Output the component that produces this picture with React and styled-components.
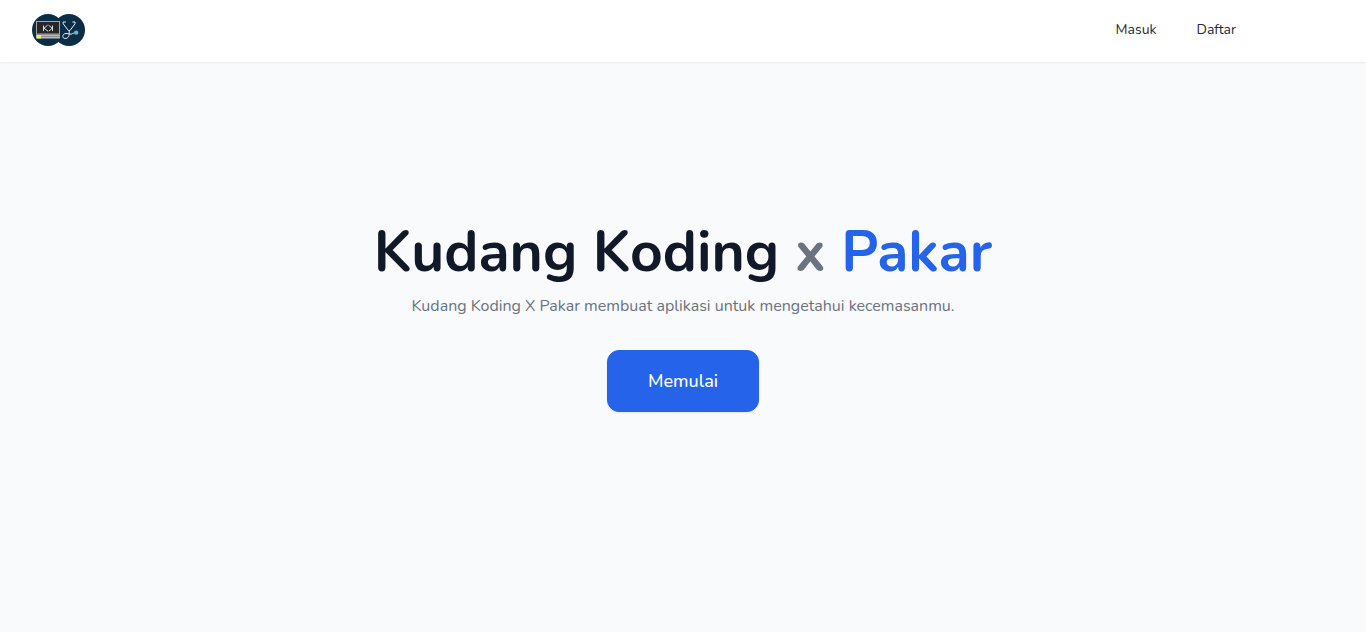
import React from "react";
import styled, { createGlobalStyle } from "styled-components";

const GlobalStyle = createGlobalStyle`
  *, *::before, *::after { box-sizing: border-box; }
  body {
    margin: 0;
    background: #f9fafc;
    font-family: Nunito, Lato, "Open Sans", sans-serif;
  }
`;

const Page = styled.div`
  display: flex;
  flex-direction: column;
  min-height: 100vh;
  background: #f9fafc;
`;

const Header = styled.header`
  display: flex;
  align-items: center;
  justify-content: space-between;
  padding: 14px 130px 16px 32px;
  background: #fff;
  box-shadow: 0 1px 2px rgba(0, 0, 0, 0.06);
`;

const HomeLink = styled.a`
  display: flex;
`;

const Nav = styled.nav`
  display: flex;
  gap: 40px;
`;

const NavLink = styled.a`
  color: #1f2937;
  font-size: 14px;
  line-height: 20px;
  text-decoration: none;
`;

const Hero = styled.main`
  display: flex;
  flex-direction: column;
  align-items: center;
  padding: 160px 32px 32px;
  text-align: center;
`;

const Title = styled.h1`
  margin: 0;
  color: #111827;
  font-size: 57px;
  font-weight: 700;
  line-height: 60px;
`;

const Accent = styled.span`
  color: ${({ $tone }) => ($tone === "brand" ? "#2563eb" : "#6b7280")};
`;

const Tagline = styled.p`
  margin: 12px 0 32px;
  color: #6b7280;
  font-size: 16px;
  line-height: 24px;
`;

const StartButton = styled.button`
  padding: 16px 40px;
  border: 1px solid #2563eb;
  border-radius: 12px;
  background: #2563eb;
  box-shadow: 0 1px 2px rgba(0, 0, 0, 0.08);
  color: #fff;
  font-family: inherit;
  font-size: 18px;
  font-weight: 500;
  line-height: 28px;
  cursor: pointer;
`;

function Logo() {
  return (
    <svg width="53" height="32" viewBox="0 0 53 32" aria-hidden="true">
      <circle cx="16" cy="16" r="16" fill="#0b2d48" />
      <circle cx="37" cy="16" r="16" fill="#0b2d48" />
      <rect x="4.5" y="7.5" width="23" height="12.5" fill="#252629" stroke="#aaa6a2" />
      <g fill="none" stroke="#f2f2f2" strokeWidth="0.9">
        <path d="M11.5 11.5v5.5M15.6 11.2l-3.6 3 4 3M20.5 11.5v5.5M16.6 11.2l3.6 3-3.4 3" />
      </g>
      <path d="M4 20.5h24v4H4z" fill="#bdbdb8" />
      <path d="M9 22.5h19" stroke="#8b8c8b" />
      <path d="M5 21h4v3.5H5z" fill="#eef03b" />
      <g fill="none" stroke="#e6edf2" strokeWidth="1" strokeLinecap="round" strokeLinejoin="round">
        <path d="M33.5 8h-2.3v1.8l5.2 6.7h1.6l5-6.7V8h-2.2" />
        <path d="M37.2 16.5v3.7c0 5-6.4 5.6-6.4 2.1 0-2.8 3.7-3.4 6.4-2.3 2.5 1 3.7-1.3 6-1.3" />
      </g>
      <circle cx="44.2" cy="18.6" r="2.2" fill="#65b6c9" />
    </svg>
  );
}

export default function App() {
  return (
    <Page>
      <GlobalStyle />
      <Header>
        <HomeLink href="#" aria-label="Kudang Koding x Pakar">
          <Logo />
        </HomeLink>
        <Nav>
          <NavLink href="#masuk">Masuk</NavLink>
          <NavLink href="#daftar">Daftar</NavLink>
        </Nav>
      </Header>
      <Hero>
        <Title>
          Kudang Koding <Accent>x</Accent> <Accent $tone="brand">Pakar</Accent>
        </Title>
        <Tagline>Kudang Koding X Pakar membuat aplikasi untuk mengetahui kecemasanmu.</Tagline>
        <StartButton type="button">Memulai</StartButton>
      </Hero>
    </Page>
  );
}
